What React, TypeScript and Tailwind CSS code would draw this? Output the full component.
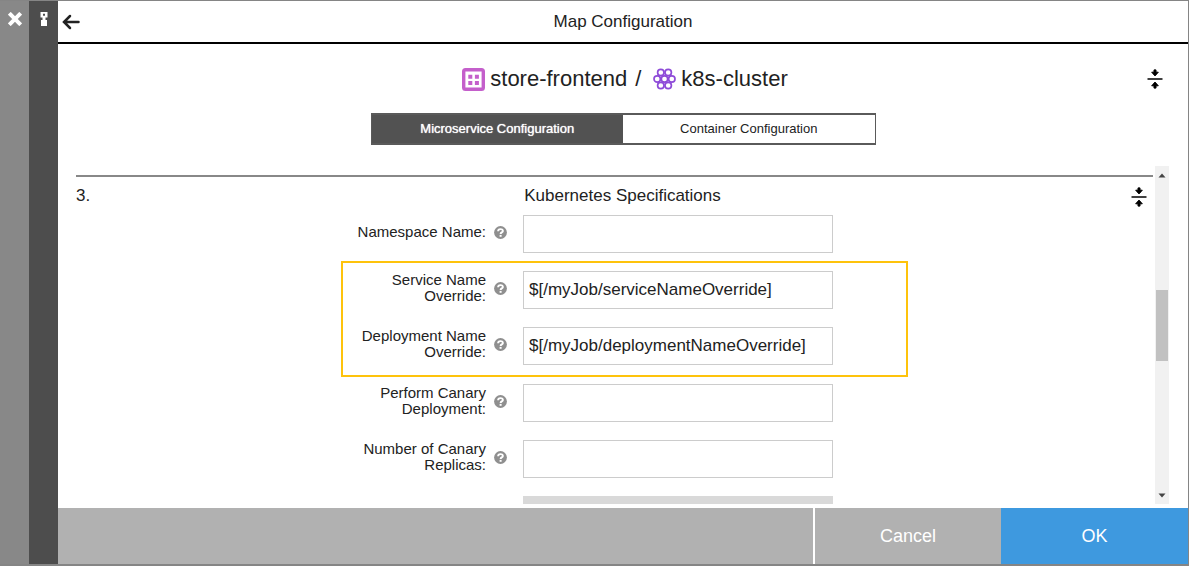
import type { ReactNode } from "react";

function CloseIcon() {
  return (
    <svg width="14" height="14" viewBox="0 0 14 14" aria-hidden="true">
      <path d="M2.7 2.7 11.3 11.3M11.3 2.7 2.7 11.3" stroke="#fff" strokeWidth="4" strokeLinecap="square" />
    </svg>
  );
}

function NodeIcon() {
  return (
    <svg width="8" height="14" viewBox="0 0 8 14" aria-hidden="true">
      <path fill="#fff" fillRule="evenodd" d="M.5 0h7v5.5h-2V8H7v6H1V8h1.500V5.500H.5zM3 1.800v2h2v-2z" />
    </svg>
  );
}

function BackIcon() {
  return (
    <svg width="18" height="16" viewBox="0 0 18 16" fill="none" stroke="#222" strokeWidth="2.5" strokeLinecap="round" aria-hidden="true">
      <path d="M16.500 8H2.500M8 2 2 8l6 6" />
    </svg>
  );
}

function CollapseIcon() {
  return (
    <svg width="16" height="20" viewBox="0 0 16 20" fill="#000" stroke="#000" strokeLinejoin="round" aria-hidden="true">
      <path d="M.5 10h15" strokeWidth="1.500" />
      <path d="M7 .9h2v2.300h2.300L8 6.900 4.700 3.200H7zM7 19.100h2v-2.300h2.300L8 13.100l-3.300 3.700H7z" strokeWidth="1" />
    </svg>
  );
}

function ServiceIcon() {
  return (
    <svg width="23" height="23" viewBox="0 0 23 23" aria-hidden="true">
      <rect x="1.700" y="1.700" width="19.600" height="19.600" rx="1.800" fill="#fff" stroke="#c45fcb" strokeWidth="3.400" />
      <path fill="#c45fcb" d="M6.300 6.700h4v4h-4zM12.900 6.700h4v4h-4zM6.300 12.900h4v4h-4zM12.900 12.900h4v4h-4z" />
    </svg>
  );
}

function ClusterIcon() {
  return (
    <svg width="23" height="22" viewBox="0 0 23 22" fill="none" stroke="#8e4bd8" strokeWidth="1.700" aria-hidden="true">
      <circle cx="11.500" cy="11" r="3.200" />
      <circle cx="4.200" cy="11" r="3.200" />
      <circle cx="18.800" cy="11" r="3.200" />
      <circle cx="7.800" cy="4.500" r="3.200" />
      <circle cx="15.200" cy="4.500" r="3.200" />
      <circle cx="7.800" cy="17.500" r="3.200" />
      <circle cx="15.200" cy="17.500" r="3.200" />
    </svg>
  );
}

function HelpIcon() {
  return (
    <svg width="13" height="13" viewBox="0 0 13 13" aria-hidden="true">
      <circle cx="6.500" cy="6.500" r="6.400" fill="#8f8f8f" />
      <path d="M4.100 5.200C4.100 2.400 8.900 2.500 8.900 4.900c0 1.500-2.300 1.500-2.300 3" fill="none" stroke="#fff" strokeWidth="1.900" />
      <rect x="5.600" y="8.900" width="2" height="1.900" fill="#fff" />
    </svg>
  );
}

function Field({ id, label, value }: { id: string; label: string; value?: string }) {
  return (
    <div className="flex items-center">
      <div className="flex items-center pb-1">
        <label htmlFor={id} className="w-[143px] text-right text-[15px] leading-4">
          {label}
        </label>
        <button type="button" aria-label={"Help: " + label} className="mr-4 ml-2">
          <HelpIcon />
        </button>
      </div>
      <input
        id={id}
        type="text"
        defaultValue={value}
        className="h-[38px] w-[310px] border border-[#ccc] bg-white px-[5px] text-[17px] outline-none"
      />
    </div>
  );
}

function FieldGroup({ children }: { children: ReactNode }) {
  return <div className="flex flex-col gap-[18px] px-0.5">{children}</div>;
}

export default function App() {
  return (
    <div className="flex h-screen overflow-hidden border-t border-r border-b-2 border-[#858585] bg-white font-['Liberation_Sans',Arial,sans-serif] text-[#222]">
      <div className="flex w-[29px] shrink-0 justify-center bg-[#888] pt-[11px]">
        <button type="button" aria-label="Close" className="h-[14px] pl-px">
          <CloseIcon />
        </button>
      </div>
      <div className="flex w-[29px] shrink-0 justify-center bg-[#4d4d4d] pt-[11px]">
        <button type="button" aria-label="Map" className="h-[14px]">
          <NodeIcon />
        </button>
      </div>

      <main className="flex min-w-0 flex-1 flex-col">
        <header className="grid h-[43px] shrink-0 grid-cols-[32px_1fr_32px] items-center border-b-2 border-black">
          <button type="button" aria-label="Back" className="pl-1">
            <BackIcon />
          </button>
          <h1 className="text-center text-[17px] leading-5">Map Configuration</h1>
        </header>

        <div className="grid grid-cols-[45px_1fr_41px] items-center pt-[21px]">
          <h2 className="col-start-2 flex items-center justify-center text-[22px] leading-7">
            <ServiceIcon />
            <span className="ml-[5px]">store-frontend</span>
            <span className="mr-3 ml-2">/</span>
            <ClusterIcon />
            <span className="ml-[5px]">k8s-cluster</span>
          </h2>
          <button type="button" aria-label="Collapse all" className="flex justify-start">
            <CollapseIcon />
          </button>
        </div>

        <div className="mx-auto mt-5 flex h-8 w-[505px] shrink-0 border-x border-y-2 border-[#5a5a5a] text-[13px]">
          <button type="button" className="flex-1 bg-[#525252] text-white [text-shadow:0_0_1px_#fff]">
            Microservice Configuration
          </button>
          <button type="button" className="flex-1 bg-white">
            Container Configuration
          </button>
        </div>

        <div className="mt-[21px] mr-[19px] mb-1 ml-[18px] flex min-h-0 flex-1">
          <section className="min-w-0 flex-1 overflow-hidden pt-[9px]">
            <div className="mr-0.5 grid grid-cols-[38px_1fr_22px] items-center border-t-2 border-[#888] pt-[9px]">
              <span className="text-[17px] leading-5">3.</span>
              <h3 className="text-center text-[17px] leading-5">Kubernetes Specifications</h3>
              <button type="button" aria-label="Collapse section" className="flex h-5 items-start pt-px">
                <CollapseIcon />
              </button>
            </div>
            <form className="ml-[18px] flex justify-center pt-[9px]">
              <div className="w-[567px]">
                <FieldGroup>
                  <Field id="namespace" label="Namespace Name:" />
                </FieldGroup>
                <div className="mt-2 mb-[7px] flex flex-col gap-[18px] border-2 border-[#fec30c] pt-2 pb-2.5">
                  <Field id="service" label="Service Name Override:" value="$[/myJob/serviceNameOverride]" />
                  <Field id="deployment" label="Deployment Name Override:" value="$[/myJob/deploymentNameOverride]" />
                </div>
                <FieldGroup>
                  <Field id="canary" label="Perform Canary Deployment:" />
                  <Field id="replicas" label="Number of Canary Replicas:" />
                  <input disabled type="text" aria-label="Default value" className="ml-[180px] h-[38px] w-[310px] bg-[#d9d9d9]" />
                </FieldGroup>
              </div>
            </form>
          </section>
          <div className="flex w-[14px] shrink-0 flex-col items-center bg-[#f1f1f1]" aria-hidden="true">
            <svg width="14" height="17" viewBox="0 0 14 17">
              <path d="M3.500 11.500 7 7.500l3.500 4z" fill="#444" />
            </svg>
            <div className="grow-[107]" />
            <div className="h-[71px] w-3 bg-[#c1c1c1]" />
            <div className="grow-[126]" />
            <svg width="14" height="17" viewBox="0 0 14 17">
              <path d="M3.500 6.500 7 10.500l3.500-4z" fill="#444" />
            </svg>
          </div>
        </div>

        <footer className="flex h-14 shrink-0 bg-[#b1b1b1] text-[18px] text-white">
          <div className="flex-1" />
          <button type="button" className="w-[188px] border-l-2 border-white">
            Cancel
          </button>
          <button type="button" className="w-[187px] bg-[#3e99df]">
            OK
          </button>
        </footer>
      </main>
    </div>
  );
}
